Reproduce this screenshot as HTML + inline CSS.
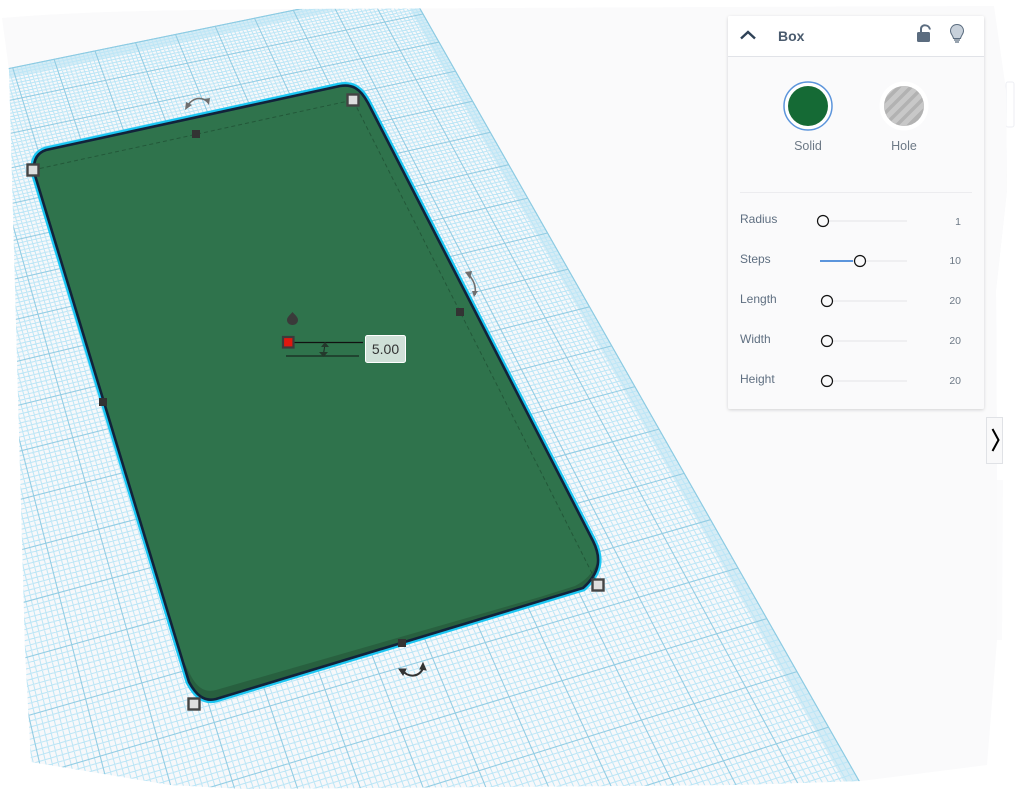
<!DOCTYPE html>
<html><head><meta charset="utf-8"><style>
html,body{margin:0;padding:0;background:#fff;width:1017px;height:789px;overflow:hidden}
svg{position:absolute;left:0;top:0;display:block}
text{font-family:"Liberation Sans",sans-serif}
</style></head><body>
<svg id="s" width="1017" height="789" viewBox="0 0 1017 789" xmlns="http://www.w3.org/2000/svg">
<defs>
<clipPath id="shot"><path d="M2,18 C100,10 200,10 295,9 L720,7 L994,6 L1006,90 L1007,190 L996,290 L997,500 L997,640 L987,765 L861,781 L737,785 L245,789 L170,785 L31,762 L25,650 L9,70 Z"/></clipPath>
<clipPath id="box"><path d="M34,172 C33,160 37,153 46,150 L340,86 C352,84 360,88 368,103 L593,541 C601,557 601,572 583,588 L216,699 C204,702 196,695 189,682 Z"/></clipPath>
<clipPath id="holec"><circle cx="904" cy="106" r="20"/></clipPath>
<filter id="sh" x="-5%" y="-5%" width="110%" height="110%"><feDropShadow dx="0" dy="1" stdDeviation="1.500" flood-color="#000" flood-opacity=".16"/></filter>
</defs>
<path d="M994,30 L1006,90 L1007,190 L996,290 L997,480 L1003,480 L997,500 Z" fill="#f1f2f6"/>
<path d="M997,480 L1003,480 L1002,640 L997,640 Z" fill="#fbfbfc"/>
<rect x="1006" y="82" width="8" height="45" rx="2" fill="#fff" stroke="#eceef3"/>
<g clip-path="url(#shot)">
<rect width="1017" height="789" fill="#fafafb"/>
<path id="plate" fill="#f7f8fa"/>
<path id="band" fill="#a9dcee" fill-opacity=".42"/>
<path id="minor" fill="none" stroke="#bde6f6" stroke-width="1.050"/>
<path id="major" fill="none" stroke="#93cde4" stroke-width="1.100"/>
<path id="edge" fill="none" stroke="#8ccbe3" stroke-width="1"/>
</g>
<!-- box -->
<path d="M34,172 C33,160 37,153 46,150 L340,86 C352,84 360,88 368,103 L593,541 C601,557 601,572 583,588 L216,699 C204,702 196,695 189,682 Z" fill="none" stroke="#1cc6f2" stroke-width="7"/>
<path d="M34,172 C33,160 37,153 46,150 L340,86 C352,84 360,88 368,103 L593,541 C601,557 601,572 583,588 L216,699 C204,702 196,695 189,682 Z" fill="#2f734c"/>
<g clip-path="url(#box)">
<path d="M178,650 L190,674 C197,688 205,693 216,690 L540,597 L575,586 C585,581 592,574 597,563 L612,600 L200,720 Z" fill="#28603f"/>
</g>
<path d="M34,172 C33,160 37,153 46,150 L340,86 C352,84 360,88 368,103 L593,541 C601,557 601,572 583,588 L216,699 C204,702 196,695 189,682 Z" fill="none" stroke="#12233a" stroke-width="2.600"/>
<path d="M33,170 L353,100 L598,585" fill="none" stroke="#1d4a30" stroke-opacity=".65" stroke-width="1" stroke-dasharray="4 3"/>
<!-- handles -->
<g fill="#dedede" stroke="#444" stroke-width="2.400">
<rect x="27.500" y="164.500" width="11" height="11"/>
<rect x="347.500" y="94.500" width="11" height="11"/>
<rect x="592.500" y="579.500" width="11" height="11"/>
<rect x="188.500" y="698.500" width="11" height="11"/>
</g>
<g fill="#333">
<rect x="192" y="130" width="8" height="8"/>
<rect x="456" y="308" width="8" height="8"/>
<rect x="398" y="639" width="8" height="8"/>
<rect x="99" y="398" width="8" height="8"/>
</g>
<!-- rotation arrows -->
<g fill="none" stroke="#6f6f6f" stroke-width="1.600">
<path d="M188,105 C193,98 201,96 208,102"/>
<path d="M469,275 C475,282 476,288 475,295"/>
</g>
<g fill="#6f6f6f">
<path d="M185,110 L186,102 L192,105 Z"/><path d="M204,99 L210,98 L209,105 Z"/>
<path d="M465,272 L472,271 L470,279 Z"/><path d="M472,291 L478,291 L474,297 Z"/>
</g>
<path d="M402,670 C408,678 420,678 424,666" fill="none" stroke="#333" stroke-width="2"/>
<path d="M399,669 L406,669 L403,675 Z M423,663 L426,670 L420,669 Z" fill="#333" stroke="#333" stroke-width="1"/>
<!-- center -->
<path d="M292.500,312 C295,315 298,317 298,320 C298,323 295.500,325 292.500,325 C289.500,325 287,323 287,320 C287,317 290,315 292.500,312 Z" fill="#3a3a3a"/>
<path d="M294,342.500 H363" stroke="#111" stroke-width="1.200"/>
<path d="M286,356 H359" stroke="#1c3526" stroke-width="1.600"/>
<path d="M325,344 L323.500,354" stroke="#1c2a22" stroke-width="1"/>
<path d="M321,347 L325,342 L329,347 Z M319,352 L328,352 L323.500,357 Z" fill="#24392c"/>
<rect x="283" y="337" width="10.500" height="10.500" fill="#e0180f" stroke="#3b3b3b" stroke-width="2.200"/>
<rect x="365.500" y="335.500" width="40" height="27" rx="2" fill="#cfe0d7" stroke="#fff" stroke-width="1"/>
<text x="385.500" y="354" text-anchor="middle" font-size="14" fill="#333">5.00</text>
<!-- panel -->
<g filter="url(#sh)"><rect x="728" y="16" width="256" height="393" rx="2" fill="#fafafb"/></g>
<path d="M728,56 V18 A2,2 0 0 1 730,16 H982 A2,2 0 0 1 984,18 V56 Z" fill="#fff"/>
<path d="M728,56.500 H984" stroke="#e1e3e8" stroke-width="1"/>
<path d="M741,38.500 L748,32 L755,38.500" fill="none" stroke="#2f4257" stroke-width="2.400"/>
<text x="778" y="41" font-size="14" font-weight="bold" fill="#4a5b6e">Box</text>
<rect x="917" y="32" width="13" height="10" rx="1.500" fill="#5b6c7f"/>
<path d="M921,32 V29 C921,24 929,24 930,29.500" fill="none" stroke="#5b6c7f" stroke-width="2"/>
<path d="M957,24.500 C953,24.500 950.500,27.500 950.500,31 C950.500,34 953,35.500 953.500,38.500 H960.500 C961,35.500 963.500,34 963.500,31 C963.500,27.500 961,24.500 957,24.500 Z" fill="#c7d0da" stroke="#5b6c7f" stroke-width="1"/>
<path d="M954,40 H960 M955,42 H959" stroke="#5b6c7f" stroke-width="1.200"/>
<circle cx="808" cy="106" r="24" fill="#fff" stroke="#5c95db" stroke-width="1.500"/>
<circle cx="808" cy="106" r="20" fill="#156a35"/>
<circle cx="904" cy="106" r="24.500" fill="#fff"/>
<circle cx="904" cy="106" r="20" fill="#b2b2b2"/>
<g clip-path="url(#holec)" stroke="#c8c8c8" stroke-width="5">
<path d="M880,112 L910,82 M880,124 L922,82 M888,128 L930,86 M900,128 L930,98 M880,100 L898,82"/>
</g>
<text x="808" y="150" text-anchor="middle" font-size="12.500" fill="#6d7986">Solid</text>
<text x="904" y="150" text-anchor="middle" font-size="12.500" fill="#6d7986">Hole</text>
<path d="M740,192.500 H972" stroke="#ececef" stroke-width="1"/>
<g font-size="12" fill="#5f6f81">
<text x="740" y="223">Radius</text>
<text x="740" y="263">Steps</text>
<text x="740" y="303">Length</text>
<text x="740" y="343">Width</text>
<text x="740" y="383">Height</text>
</g>
<g font-size="10.500" fill="#6d7986" text-anchor="end">
<text x="961" y="225">1</text>
<text x="961" y="264">10</text>
<text x="961" y="304">20</text>
<text x="961" y="344">20</text>
<text x="961" y="384">20</text>
</g>
<g fill="#efeff1">
<rect x="820" y="220" width="87" height="2"/>
<rect x="820" y="260" width="87" height="2"/>
<rect x="820" y="300" width="87" height="2"/>
<rect x="820" y="340" width="87" height="2"/>
<rect x="820" y="380" width="87" height="2"/>
</g>
<rect x="820" y="260" width="33" height="2" fill="#5b95dc"/>
<g fill="#fafafb" stroke="#111" stroke-width="1.200">
<circle cx="823" cy="221" r="5.500"/>
<circle cx="860" cy="261" r="5.500"/>
<circle cx="827" cy="301" r="5.500"/>
<circle cx="827" cy="341" r="5.500"/>
<circle cx="827" cy="381" r="5.500"/>
</g>
<rect x="986.500" y="417.500" width="16" height="46" fill="#f9f9fa" stroke="#e0e2e6"/>
<path d="M992.500,429 L998.500,440 L992.500,451" fill="none" stroke="#000" stroke-width="2"/>
</svg>
<script>
(function(){
var x0=738,y0=568,x1=270,y1=706,x2=64,y2=89,x3=423,y3=14;
var dx1=x1-x2,dx2=x3-x2,sx=x0-x1+x2-x3,dy1=y1-y2,dy2=y3-y2,sy=y0-y1+y2-y3;
var den=dx1*dy2-dx2*dy1,g=(sx*dy2-dx2*sy)/den,h=(dx1*sy-sx*dy1)/den;
var a=x1-x0+g*x1,b=x3-x0+h*x3,c=x0,d=y1-y0+g*y1,e=y3-y0+h*y3,f=y0;
function P(u,j){var s=u/9,t=j/15,w=g*s+h*t+1;return ((a*s+b*t+c)/w).toFixed(1)+","+((d*s+e*t+f)/w).toFixed(1);}
var U0=0,U1=16,J0=-6,J1=16,mi="",ma="",i;
for(i=0;i<=(U1-U0)*10;i++){var u=U0+i/10,l="M"+P(u,J0)+"L"+P(u,J1);if(i%10==0)ma+=l;else mi+=l;}
for(i=0;i<=(J1-J0)*10;i++){var j=J0+i/10,l2="M"+P(U0,j)+"L"+P(U1,j);if(i%10==0)ma+=l2;else mi+=l2;}
function poly(a1,b1,a2,b2){return "M"+P(a1,b1)+"L"+P(a2,b1)+"L"+P(a2,b2)+"L"+P(a1,b2)+"Z";}
function set(id,v){document.getElementById(id).setAttribute("d",v);}
set("minor",mi);set("major",ma);
set("plate",poly(U0,J0,U1,J1));
set("band",poly(0,J0,0.25,J1)+poly(0,15.72,U1,J1));
set("edge",poly(U0,J0,U1,J1));
})();
</script>
</body></html>
